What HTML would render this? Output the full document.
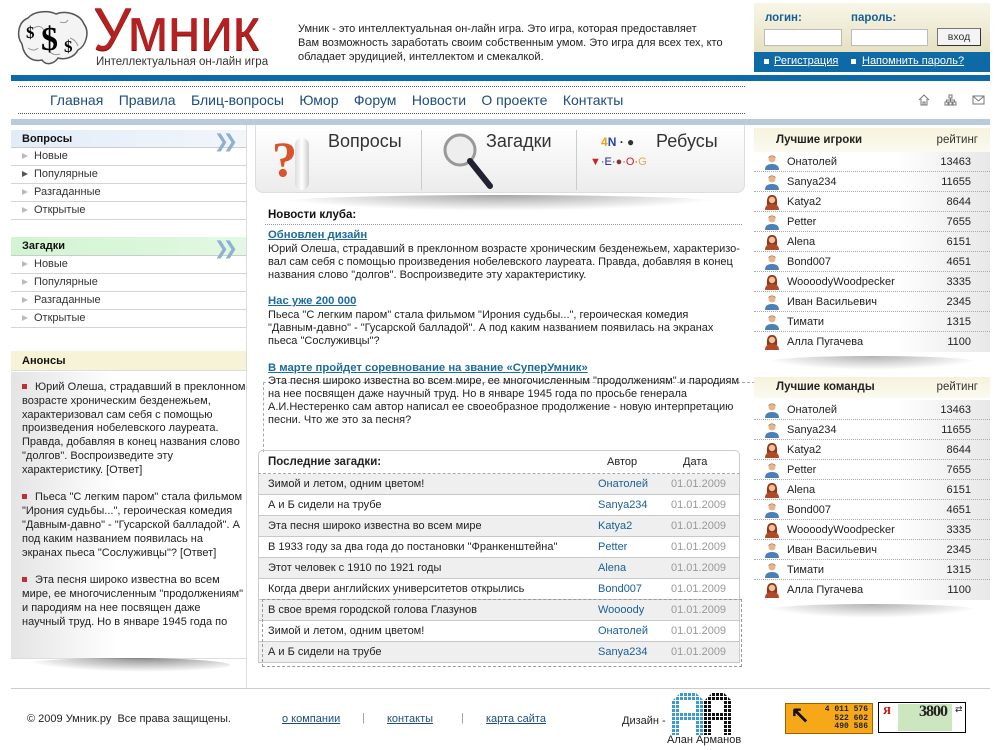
<!DOCTYPE html>
<html><head><meta charset="utf-8">
<style>
*{margin:0;padding:0;box-sizing:border-box}
body{width:1000px;height:750px;position:relative;overflow:hidden;background:#fff;font-family:"Liberation Sans","DejaVu Sans",sans-serif;font-size:11px;color:#222}
.a{position:absolute;white-space:nowrap}
.t{position:absolute;white-space:nowrap;line-height:13px}
.lnk{color:#1b6c9c;font-weight:bold;text-decoration:underline;font-size:11.3px}
.nav{position:absolute;top:92px;left:50px;font-size:14px;color:#1d4c7d}
.nav span{margin-right:11.5px}
.lh{position:absolute;left:11px;width:235px;font-weight:bold;padding-left:11px;color:#111}
.li{position:absolute;left:11px;width:235px;height:18px;border-bottom:1px solid #d4d4d4;padding-left:23px;line-height:17px;color:#333}
.li:before{content:"";position:absolute;left:11px;top:5px;border-left:6px solid #bbb;border-top:3.5px solid transparent;border-bottom:3.5px solid transparent}
.li.d:before{border-left-color:#555}
.chev{position:absolute;right:14px;top:2px;color:#8fb0d0;font-size:18px;font-weight:bold;letter-spacing:-6px}
.rh{position:absolute;left:754px;width:236px;background:linear-gradient(#f6f2dc,#fbfaf0);font-weight:bold;padding-left:22px;font-size:11.5px}
.rh i{position:absolute;right:12px;font-style:normal;font-weight:normal;color:#333}
.rr{position:absolute;left:754px;width:236px;height:20px;border-bottom:1px dotted #aaa;background:linear-gradient(90deg,#fff 60%,#e8e8e8);line-height:20px}
.rr span{position:absolute;left:33px}
.rr b{position:absolute;right:19px;font-weight:normal}
.rr svg{position:absolute;left:10px;top:2px}
.tr{position:absolute;left:258px;width:482px;height:21px;border-bottom:1px solid #c8c8c8;line-height:20px;border-left:1px solid #ccc;border-right:1px solid #ccc}
.tr.g{background:#efefef}
.tr span{position:absolute;left:9px}
.tr u{position:absolute;left:339px;text-decoration:none;color:#1b5e94}
.tr b{position:absolute;left:412px;font-weight:normal;color:#999}
</style></head><body>

<svg class="a" style="left:14px;top:8px" width="76" height="60" viewBox="0 0 76 60">
<path d="M8 36 C2 28 4 14 14 10 C20 3 34 2 42 6 C52 2 66 6 70 16 C76 24 72 38 64 42 C60 50 50 52 44 50 C40 56 32 58 28 52 C20 54 10 50 8 36Z" fill="#f4f4f4" stroke="#555" stroke-width="1.5"/>
<path d="M20 20 q6 -4 10 2 M46 14 q6 2 8 -2 M56 30 q6 2 8 8 M14 40 q6 4 10 0 M36 44 q4 4 10 2" stroke="#999" fill="none"/>
<text x="12" y="30" font-size="17" font-weight="bold" font-family="Liberation Serif">$</text>
<text x="27" y="42" font-size="34" font-weight="bold" font-family="Liberation Serif">$</text>
<text x="50" y="44" font-size="17" font-weight="bold" font-family="Liberation Serif">$</text>
</svg>
<div class="a" style="left:93px;top:0px;font-size:60px;color:#b52020;letter-spacing:-1px;line-height:60px;text-shadow:0 1px 0 #701010">Умник</div>
<div class="a" style="left:96px;top:56px;font-size:11.5px;color:#333;background:#fff;padding-right:2px">Интеллектуальная он-лайн игра</div>

<div class="a" style="left:298px;top:22px;line-height:14px;font-size:11px;color:#222">Умник - это интеллектуальная он-лайн игра. Это игра, которая предоставляет<br>Вам возможность заработать своим собственным умом. Это игра для всех тех, кто<br>обладает эрудицией, интеллектом и смекалкой.</div>

<div class="a" style="left:754px;top:3px;width:236px;height:49px;background:linear-gradient(#f8f6e8,#e6e0c0)"></div>
<div class="a" style="left:765px;top:12px;font-weight:bold;color:#115f98;font-size:11.5px">логин:</div>
<div class="a" style="left:851px;top:12px;font-weight:bold;color:#115f98;font-size:11.5px">пароль:</div>
<div class="a" style="left:764px;top:29px;width:78px;height:17px;background:#fff;border:1px solid #bbb"></div>
<div class="a" style="left:851px;top:29px;width:77px;height:17px;background:#fff;border:1px solid #bbb"></div>
<div class="a" style="left:937px;top:28px;width:44px;height:18px;background:#f4f4f4;border:1px solid #777;border-right-color:#333;border-bottom-color:#333;text-align:center;line-height:16px;font-size:10.5px;color:#333">вход</div>
<div class="a" style="left:754px;top:52px;width:236px;height:20px;background:#0e6aa6;color:#fff;line-height:19px;font-size:11px">
<span style="position:absolute;left:10px;top:7px;width:5px;height:5px;background:#fff"></span><span style="position:absolute;left:20px;text-decoration:underline">Регистрация</span>
<span style="position:absolute;left:97px;top:7px;width:5px;height:5px;background:#fff"></span><span style="position:absolute;left:108px;text-decoration:underline">Напомнить пароль?</span></div>

<div class="a" style="left:11px;top:75px;width:979px;height:6px;background:#0e6aa6"></div>
<div class="a" style="left:18px;top:86px;width:727px;border-top:1px dotted #555"></div>
<div class="a" style="left:18px;top:113px;width:727px;border-top:1px dotted #555"></div>
<div class="nav"><span>Главная</span> <span>Правила</span> <span>Блиц-вопросы</span> <span>Юмор</span> <span>Форум</span> <span>Новости</span> <span>О проекте</span> <span>Контакты</span></div>
<svg class="a" style="left:918px;top:94px" width="70" height="12" viewBox="0 0 70 12" fill="none" stroke="#777">
<path d="M1 6 L6 1 L11 6 M3 5 V11 H9 V5 M5 11 V8 H7 V11"/>
<path d="M31 1 h3 v3 h-3z M27 8 h3 v3 h-3z M31 8 h3 v3 h-3z M35 8 h3 v3 h-3z M32.5 4 v4 M28.5 8 V6 H36.5 V8"/>
<path d="M55 2 h11 v8 h-11z M55 2 l5.5 5 l5.5 -5"/>
</svg>
<div class="a" style="left:11px;top:119px;width:979px;height:6px;background:#b9cadb"></div>

<div class="a" style="left:246px;top:125px;height:563px;border-left:1px solid #ddd"></div>
<div class="lh" style="top:130px;height:18px;line-height:18px;background:linear-gradient(90deg,#e2ecf8,#f2f6fb);border-bottom:1px solid #ccc">Вопросы<span class="chev">&#x276F;&#x276F;</span></div>
<div class="li" style="top:148px">Новые</div>
<div class="li d" style="top:166px">Популярные</div>
<div class="li" style="top:184px">Разгаданные</div>
<div class="li" style="top:202px">Открытые</div>
<div class="lh" style="top:237px;height:19px;line-height:19px;background:linear-gradient(90deg,#d2f4d2,#e2f8e2);border-bottom:1px solid #ccc">Загадки<span class="chev">&#x276F;&#x276F;</span></div>
<div class="li" style="top:256px">Новые</div>
<div class="li" style="top:274px">Популярные</div>
<div class="li" style="top:292px">Разгаданные</div>
<div class="li" style="top:310px">Открытые</div>
<div class="lh" style="top:351px;height:20px;line-height:20px;background:#f7f3d6;border-bottom:1px solid #ddd">Анонсы</div>
<div class="a" style="left:11px;top:372px;width:235px;height:287px;background:linear-gradient(90deg,#e4e4e4,#fff 45%);border-bottom:1px solid #ddd"></div>
<div class="a" style="left:22px;top:381px;line-height:13.8px;font-size:11px;color:#222">
<span style="display:inline-block;width:5px;height:5px;background:#c03030;margin:0 5px 1px 0"></span> Юрий Олеша, страдавший в преклонном<br>возрасте хроническим безденежьем,<br>характеризовал сам себя с помощью<br>произведения нобелевского лауреата.<br>Правда, добавляя в конец названия слово<br>"долгов". Воспроизведите эту<br>характеристику. [Ответ]<br><br>
<span style="display:inline-block;width:5px;height:5px;background:#c03030;margin:0 5px 1px 0"></span> Пьеса "С легким паром" стала фильмом<br>"Ирония судьбы...", героическая комедия<br>"Давным-давно" - "Гусарской балладой". А<br>под каким названием появилась на<br>экранах пьеса "Сослуживцы"? [Ответ]<br><br>
<span style="display:inline-block;width:5px;height:5px;background:#c03030;margin:0 5px 1px 0"></span> Эта песня широко известна во всем<br>мире, ее многочисленным "продолжениям"<br>и пародиям на нее посвящен даже<br>научный труд. Но в январе 1945 года по</div>
<div class="a" style="left:20px;top:658px;width:210px;height:14px;border-radius:50%;background:radial-gradient(ellipse at 60% 0%,rgba(0,0,0,.45),rgba(0,0,0,0) 70%)"></div>

<div class="a" style="left:255px;top:125px;width:490px;height:68px;border:1px solid #ddd;border-top:none;border-radius:0 0 8px 8px;background:linear-gradient(#fff,#ececec)"></div>
<div class="a" style="left:270px;top:195px;width:460px;height:16px;border-radius:50%;background:radial-gradient(ellipse at 50% 0%,rgba(0,0,0,.35),rgba(0,0,0,0) 70%)"></div>
<div class="a" style="left:421px;top:130px;height:60px;border-left:1px solid #ccc"></div>
<div class="a" style="left:576px;top:130px;height:60px;border-left:1px solid #ccc"></div>
<div class="a" style="left:272px;top:128px;font-size:50px;font-weight:bold;color:#d9542a;font-family:'Liberation Serif',serif;line-height:62px">?</div>
<div class="a" style="left:295px;top:138px;width:14px;height:52px;background:linear-gradient(90deg,#ddd,#fff,#ccc);border-radius:7px"></div>
<div class="a" style="left:328px;top:131px;font-size:18px;color:#333">Вопросы</div>
<svg class="a" style="left:440px;top:130px" width="56" height="60"><circle cx="20" cy="20" r="15" fill="#eee" stroke="#999" stroke-width="3"/><line x1="30" y1="31" x2="50" y2="56" stroke="#223" stroke-width="6" stroke-linecap="round"/></svg>
<div class="a" style="left:486px;top:131px;font-size:18px;color:#333">Загадки</div>
<div class="a" style="left:601px;top:135px;font-size:12px;font-weight:bold"><span style="color:#f0a020">4</span><span style="color:#2244aa">N</span> · <span style="color:#333">&#9679;</span></div>
<div class="a" style="left:656px;top:131px;font-size:18px;color:#333">Ребусы</div>
<div class="a" style="left:590px;top:156px;font-size:11px"><span style="color:#c22">&#9660;</span><span style="color:#228">·E·</span><span style="color:#833">&#9679;</span><span style="color:#c22">·O·</span><span style="color:#da5">G</span></div>

<div class="a" style="left:268px;top:209px;font-weight:bold;font-size:11.5px;color:#111">Новости клуба:</div>
<div class="a" style="left:265px;top:224px;width:477px;border-top:1px dotted #999"></div>
<div class="a lnk" style="left:268px;top:229px">Обновлен дизайн</div>
<div class="t" style="left:268px;top:243px">Юрий Олеша, страдавший в преклонном возрасте хроническим безденежьем, характеризо-<br>вал сам себя с помощью произведения нобелевского лауреата. Правда, добавляя в конец<br>названия слово "долгов". Воспроизведите эту характеристику.</div>
<div class="a lnk" style="left:268px;top:295px">Нас уже 200 000</div>
<div class="t" style="left:268px;top:309px">Пьеса "С легким паром" стала фильмом "Ирония судьбы...", героическая комедия<br>"Давным-давно" - "Гусарской балладой". А под каким названием появилась на экранах<br>пьеса "Сослуживцы"?</div>
<div class="a lnk" style="left:268px;top:362px">В марте пройдет соревнование на звание «СуперУмник»</div>
<div class="a" style="left:263px;top:382px;width:502px;height:70px;border:1px dashed #aaa;border-right:none;border-bottom:none"></div>
<div class="t" style="left:268px;top:375px">Эта песня широко известна во всем мире, ее многочисленным "продолжениям" и пародиям<br>на нее посвящен даже научный труд. Но в январе 1945 года по просьбе генерала<br>А.И.Нестеренко сам автор написал ее своеобразное продолжение - новую интерпретацию<br>песни. Что же это за песня?</div>

<div class="a" style="left:258px;top:450px;width:482px;height:24px;border:1px solid #ccc;border-bottom:1px dashed #aaa;border-radius:5px 5px 0 0;line-height:22px">
<span style="position:absolute;left:9px;font-weight:bold;font-size:11.5px">Последние загадки:</span><span style="position:absolute;left:348px">Автор</span><span style="position:absolute;left:424px">Дата</span></div>
<div class="tr g" style="top:474px"><span>Зимой и летом, одним цветом!</span><u>Онатолей</u><b>01.01.2009</b></div>
<div class="tr" style="top:495px"><span>А и Б сидели на трубе</span><u>Sanya234</u><b>01.01.2009</b></div>
<div class="tr g" style="top:516px"><span>Эта песня широко известна во всем мире</span><u>Katya2</u><b>01.01.2009</b></div>
<div class="tr" style="top:537px"><span>В 1933 году за два года до постановки "Франкенштейна"</span><u>Petter</u><b>01.01.2009</b></div>
<div class="tr g" style="top:558px"><span>Этот человек с 1910 по 1921 годы</span><u>Alena</u><b>01.01.2009</b></div>
<div class="tr" style="top:579px"><span>Когда двери английских университетов открылись</span><u>Bond007</u><b>01.01.2009</b></div>
<div class="tr g" style="top:600px"><span>В свое время городской голова Глазунов</span><u>Woooody</u><b>01.01.2009</b></div>
<div class="tr" style="top:621px"><span>Зимой и летом, одним цветом!</span><u>Онатолей</u><b>01.01.2009</b></div>
<div class="tr g" style="top:642px"><span>А и Б сидели на трубе</span><u>Sanya234</u><b>01.01.2009</b></div>
<div class="a" style="left:262px;top:599px;width:480px;height:68px;border:1px dashed #999"></div>

<div class="rh" style="top:128px;height:24px;line-height:24px">Лучшие игроки<i>рейтинг</i></div>
<div class="rh" style="top:377px;height:21px;line-height:21px">Лучшие команды<i>рейтинг</i></div>

<svg width="0" height="0" style="position:absolute"><defs>
<symbol id="m" viewBox="0 0 16 16"><circle cx="8" cy="5" r="3.5" fill="#e8b58a"/><path d="M4.5 4 q3.5 -4 7 0 v-1 q-3.5 -3 -7 0z" fill="#8a5a30"/><path d="M1 16 q0 -6 7 -6 q7 0 7 6z" fill="#4a7fb8"/></symbol>
<symbol id="f" viewBox="0 0 16 16"><path d="M3 11 q-1 -10 5 -10 q6 0 5 10z" fill="#8a3a18"/><circle cx="8" cy="6" r="3.2" fill="#f0c09a"/><path d="M1 16 q0 -6 7 -6 q7 0 7 6z" fill="#b04a2a"/></symbol>
</defs></svg>

<div class="rr" style="top:152px"><svg width="16" height="16"><use href="#m"/></svg><span>Онатолей</span><b>13463</b></div>
<div class="rr" style="top:172px"><svg width="16" height="16"><use href="#m"/></svg><span>Sanya234</span><b>11655</b></div>
<div class="rr" style="top:192px"><svg width="16" height="16"><use href="#f"/></svg><span>Katya2</span><b>8644</b></div>
<div class="rr" style="top:212px"><svg width="16" height="16"><use href="#m"/></svg><span>Petter</span><b>7655</b></div>
<div class="rr" style="top:232px"><svg width="16" height="16"><use href="#f"/></svg><span>Alena</span><b>6151</b></div>
<div class="rr" style="top:252px"><svg width="16" height="16"><use href="#m"/></svg><span>Bond007</span><b>4651</b></div>
<div class="rr" style="top:272px"><svg width="16" height="16"><use href="#f"/></svg><span>WoooodyWoodpecker</span><b>3335</b></div>
<div class="rr" style="top:292px"><svg width="16" height="16"><use href="#m"/></svg><span>Иван Васильевич</span><b>2345</b></div>
<div class="rr" style="top:312px"><svg width="16" height="16"><use href="#m"/></svg><span>Тимати</span><b>1315</b></div>
<div class="rr" style="top:332px;border-bottom:none"><svg width="16" height="16"><use href="#f"/></svg><span>Алла Пугачева</span><b>1100</b></div>
<div class="a" style="left:760px;top:356px;width:225px;height:14px;border-radius:50%;background:radial-gradient(ellipse at 50% 0%,rgba(0,0,0,.3),rgba(0,0,0,0) 70%)"></div>

<div class="rr" style="top:400px"><svg width="16" height="16"><use href="#m"/></svg><span>Онатолей</span><b>13463</b></div>
<div class="rr" style="top:420px"><svg width="16" height="16"><use href="#m"/></svg><span>Sanya234</span><b>11655</b></div>
<div class="rr" style="top:440px"><svg width="16" height="16"><use href="#f"/></svg><span>Katya2</span><b>8644</b></div>
<div class="rr" style="top:460px"><svg width="16" height="16"><use href="#m"/></svg><span>Petter</span><b>7655</b></div>
<div class="rr" style="top:480px"><svg width="16" height="16"><use href="#f"/></svg><span>Alena</span><b>6151</b></div>
<div class="rr" style="top:500px"><svg width="16" height="16"><use href="#m"/></svg><span>Bond007</span><b>4651</b></div>
<div class="rr" style="top:520px"><svg width="16" height="16"><use href="#f"/></svg><span>WoooodyWoodpecker</span><b>3335</b></div>
<div class="rr" style="top:540px"><svg width="16" height="16"><use href="#m"/></svg><span>Иван Васильевич</span><b>2345</b></div>
<div class="rr" style="top:560px"><svg width="16" height="16"><use href="#m"/></svg><span>Тимати</span><b>1315</b></div>
<div class="rr" style="top:580px;border-bottom:none"><svg width="16" height="16"><use href="#f"/></svg><span>Алла Пугачева</span><b>1100</b></div>
<div class="a" style="left:760px;top:604px;width:225px;height:14px;border-radius:50%;background:radial-gradient(ellipse at 50% 0%,rgba(0,0,0,.3),rgba(0,0,0,0) 70%)"></div>

<div class="a" style="left:11px;top:688px;width:979px;border-top:1px solid #ccc"></div>
<div class="a" style="left:27px;top:713px;color:#222">© 2009 Умник.ру&nbsp; Все права защищены.</div>
<div class="a" style="left:282px;top:713px;color:#1d4c7d;text-decoration:underline">о компании</div>
<div class="a" style="left:362px;top:712px;color:#999">|</div>
<div class="a" style="left:387px;top:713px;color:#1d4c7d;text-decoration:underline">контакты</div>
<div class="a" style="left:461px;top:712px;color:#999">|</div>
<div class="a" style="left:486px;top:713px;color:#1d4c7d;text-decoration:underline">карта сайта</div>
<div class="a" style="left:622px;top:715px;color:#222">Дизайн -</div>
<svg class="a" style="left:672px;top:693px" width="62" height="42">
<defs><pattern id="pb" width="4" height="4" patternUnits="userSpaceOnUse"><rect width="3" height="3" fill="#3a9ad0"/></pattern><pattern id="pk" width="4" height="4" patternUnits="userSpaceOnUse"><rect width="3" height="3" fill="#111"/></pattern></defs>
<path d="M0 42 V8 L8 0 H24 L32 8 V42 H24 V28 H8 V42Z M8 20 H24 V8 H8Z" fill="url(#pb)" fill-rule="evenodd"/>
<path d="M32 42 V8 L40 0 H52 L60 8 V42 H52 V28 H40 V42Z M40 20 H52 V8 H40Z" fill="url(#pk)" fill-rule="evenodd"/>
</svg>
<div class="a" style="left:667px;top:734px;color:#222">Алан Арманов</div>
<div class="a" style="left:785px;top:703px;width:88px;height:31px;background:#f7a818;border:1px solid #a06000">
<span style="position:absolute;left:4px;top:-2px;font-size:24px;font-weight:bold;color:#111">&#8598;</span>
<span style="position:absolute;right:4px;top:2px;font-size:8px;line-height:8.5px;text-align:right;font-family:'Liberation Mono',monospace;font-weight:bold;color:#222">4 011 576<br>522 602<br>490 586</span></div>
<div class="a" style="left:878px;top:702px;width:88px;height:31px;border:1px solid #000;background:#fff">
<span style="position:absolute;left:4px;top:2px;color:#c00;font-weight:bold;font-family:'Liberation Serif',serif">Я</span>
<span style="position:absolute;left:19px;top:1px;width:54px;height:27px;background:#cce6c0"></span>
<span style="position:absolute;left:40px;top:0px;font-size:16px;font-family:'Liberation Serif',serif;font-weight:bold;letter-spacing:-1px">3800</span>
<span style="position:absolute;left:76px;top:1px;font-size:9px">⇄</span></div>
</body></html>
